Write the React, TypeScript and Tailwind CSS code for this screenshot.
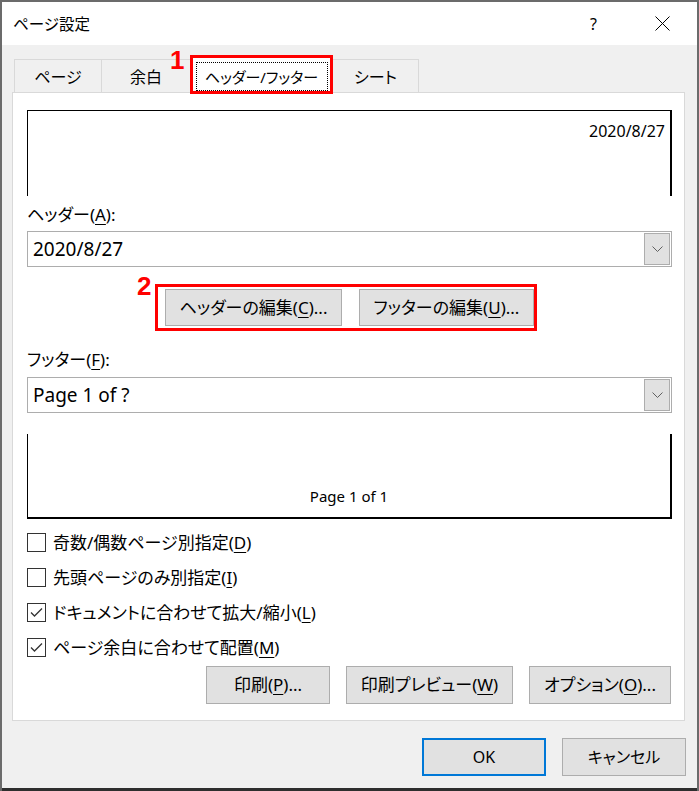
import React from "react";

function Chevron() {
  return (
    <svg width="11" height="6" viewBox="0 0 11 6" className="block">
      <polyline points="0.5,0.5 5.5,5.5 10.5,0.5" fill="none" stroke="#606060" strokeWidth="1" />
    </svg>
  );
}

function Combo({ text }: { text: string }) {
  return (
    <div className="h-[36px] border border-[#adadad] bg-white flex items-center">
      <span className="pl-[5px] text-[19px] leading-[24px] font-['Noto_Sans',sans-serif] text-black">{text}</span>
      <div className="ml-auto mr-[1px] w-[26px] h-[32px] bg-[#e1e1e1] border border-[#adadad] flex items-center justify-center">
        <Chevron />
      </div>
    </div>
  );
}

function Check({ checked, children }: { checked: boolean; children: React.ReactNode }) {
  return (
    <div className="h-[35px] flex items-center">
      <div className="w-[19px] h-[19px] border border-[#333333] bg-white flex items-center justify-center">
        {checked && (
          <svg width="17" height="17" viewBox="0 0 17 17" className="block">
            <polyline points="3,8.5 6.5,12 14,4.5" fill="none" stroke="#333333" strokeWidth="1.3" />
          </svg>
        )}
      </div>
      <span className="ml-[7px] text-[17px] leading-[22px]">{children}</span>
    </div>
  );
}

function Btn({ w, children, focus, size }: { w: string; children: React.ReactNode; focus?: boolean; size?: string }) {
  return (
    <div
      className={
        "h-[38px] bg-[#e1e1e1] flex items-center justify-center leading-[22px] " +
        w +
        " " +
        (size ?? "text-[17px]") +
        (focus ? " border-2 border-[#0078d7]" : " border border-[#adadad]")
      }
    >
      {children}
    </div>
  );
}

const U = ({ c }: { c: string }) => <span className="underline underline-offset-[3px] decoration-1">{c}</span>;

export default function App() {
  return (
    <div className="relative w-[699px] h-[791px] overflow-hidden bg-[#6b6b6b] pt-[2px] px-[2px] text-black font-['Noto_Sans','Noto_Sans_CJK_JP',sans-serif] [font-feature-settings:'palt']">
      <div className="w-[695px] h-[786px] bg-[#f0f0f0] flex flex-col">
        {/* Title bar */}
        <div className="h-[43px] shrink-0 bg-white flex items-center pl-[11px]">
          <span className="text-[15.5px] leading-[20px]">ページ設定</span>
          <span className="ml-auto text-[16px] leading-[20px]">?</span>
          <svg width="15" height="15" viewBox="0 0 15 15" className="ml-[58px] mr-[27px] block">
            <line x1="0.5" y1="0.5" x2="14.5" y2="14.5" stroke="#000" strokeWidth="1" />
            <line x1="14.5" y1="0.5" x2="0.5" y2="14.5" stroke="#000" strokeWidth="1" />
          </svg>
        </div>

        {/* Body */}
        <div className="flex-1 flex flex-col pl-[10px]">
          {/* Tabs */}
          <div className="mt-[11px] h-[36px] ml-[2px] flex items-end">
            <div className="w-[87px] h-[33px] border-t border-l border-[#d9d9d9] bg-[#f0f0f0] flex items-center justify-center pt-[2px] text-[16px] leading-[20px]">
              ページ
            </div>
            <div className="w-[89px] h-[33px] border-t border-l border-[#d9d9d9] bg-[#f0f0f0] flex items-center justify-center pt-[2px] text-[16px] leading-[20px]">
              余白
            </div>
            <div className="relative z-10 -mb-px w-[143px] h-[37px] border border-b-0 border-[#d9d9d9] bg-white flex items-center justify-center pt-[4px] text-[15px] leading-[20px]">
              ヘッダー/フッター
              <div className="absolute left-[5px] right-[4px] top-[5px] bottom-[2px] border border-dotted border-black" />
            </div>
            <div className="w-[86px] h-[33px] border-t border-r border-[#d9d9d9] bg-[#f0f0f0] flex items-center justify-center pt-[2px] text-[16px] leading-[20px]">
              シート
            </div>
          </div>

          {/* Panel */}
          <div className="w-[673px] h-[629px] bg-white border border-[#d9d9d9] flex flex-col pl-[14px] pr-[12px]">
            {/* header preview */}
            <div className="mt-[17px] h-[86px] border-t border-l border-r-2 border-black flex justify-end pr-[5px] pt-[10px]">
              <span className="text-[16px] leading-[20px] font-['Noto_Sans',sans-serif]">2020/8/27</span>
            </div>

            <div className="mt-[9px] h-[20px] text-[17px] leading-[20px]">
              ヘッダー(<U c="A" />):
            </div>
            <div className="mt-[6px]">
              <Combo text="2020/8/27" />
            </div>

            <div className="mt-[22px] flex justify-center gap-[17px]">
              <div className="w-[177px] h-[37px] bg-[#e1e1e1] border border-[#adadad] flex items-center justify-center text-[17px] leading-[22px]">
                ヘッダーの編集(<U c="C" />)...
              </div>
              <div className="w-[175px] h-[37px] bg-[#e1e1e1] border border-[#adadad] flex items-center justify-center text-[17px] leading-[22px]">
                フッターの編集(<U c="U" />)...
              </div>
            </div>

            <div className="mt-[24px] h-[20px] text-[17px] leading-[20px]">
              フッター(<U c="F" />):
            </div>
            <div className="mt-[7px]">
              <Combo text="Page 1 of ?" />
            </div>

            {/* footer preview */}
            <div className="mt-[21px] h-[85px] border-l border-r-2 border-b-2 border-black flex items-end justify-center pb-[12px]">
              <span className="text-[15px] leading-[18px] font-['Noto_Sans',sans-serif]">Page 1 of 1</span>
            </div>

            <div className="mt-[6px] flex flex-col">
              <Check checked={false}>
                奇数/偶数ページ別指定(<U c="D" />)
              </Check>
              <Check checked={false}>
                先頭ページのみ別指定(<U c="I" />)
              </Check>
              <Check checked={true}>
                ドキュメントに合わせて拡大/縮小(<U c="L" />)
              </Check>
              <Check checked={true}>
                ページ余白に合わせて配置(<U c="M" />)
              </Check>
            </div>

            <div className="mt-[1px] flex justify-end gap-[16px] pr-[1px]">
              <Btn w="w-[124px]">
                印刷(<U c="P" />)...
              </Btn>
              <Btn w="w-[167px]">
                印刷プレビュー(<U c="W" />)
              </Btn>
              <Btn w="w-[142px]">
                オプション(<U c="O" />)...
              </Btn>
            </div>
          </div>

          {/* OK / Cancel */}
          <div className="mt-[17px] flex justify-end gap-[16px] pr-[11px]">
            <Btn w="w-[124px]" size="text-[16px]" focus>
              OK
            </Btn>
            <Btn w="w-[124px]" size="text-[16px]">
              キャンセル
            </Btn>
          </div>
        </div>
      </div>
      <div className="h-[3px] bg-[#2e2e2e]" />

      {/* Annotations */}
      <div className="absolute left-[190px] top-[55px] w-[143px] h-[39px] border-[3px] border-[#ff0000] z-20" />
      <div className="absolute left-[170px] top-[47px] text-[26px] leading-none font-bold text-[#ff0000] font-['Liberation_Sans',sans-serif] z-20">
        1
      </div>
      <div className="absolute left-[155px] top-[284px] w-[382px] h-[47px] border-[3px] border-[#ff0000] z-20" />
      <div className="absolute left-[137px] top-[273px] text-[26px] leading-none font-bold text-[#ff0000] font-['Liberation_Sans',sans-serif] z-20">
        2
      </div>
    </div>
  );
}
